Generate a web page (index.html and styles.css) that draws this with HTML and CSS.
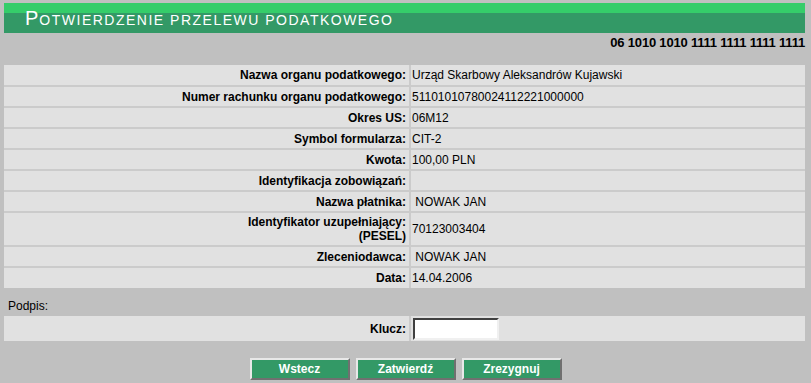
FILE: index.html
```html
<!DOCTYPE html>
<html lang="pl">

<head>
    <meta charset="UTF-8">
    <meta name="viewport" content="width=device-width, initial-scale=1.0">
    <title>Potwierdzenie przelewu podatkowego</title>
    <link rel="stylesheet" href="styles.css">
</head>

<body>
    <div class="page">
        <div class="title-bar">
            <h1 class="title"><span class="cap">P</span>OTWIERDZENIE PRZELEWU PODATKOWEGO</h1>
        </div>

        <div class="account">06 1010 1010 1111 1111 1111 1111</div>

        <table class="details">
            <tr>
                <th>Nazwa organu podatkowego:</th>
                <td>Urząd Skarbowy Aleksandrów Kujawski</td>
            </tr>
            <tr>
                <th>Numer rachunku organu podatkowego:</th>
                <td>51101010780024112221000000</td>
            </tr>
            <tr>
                <th>Okres US:</th>
                <td>06M12</td>
            </tr>
            <tr>
                <th>Symbol formularza:</th>
                <td>CIT-2</td>
            </tr>
            <tr>
                <th>Kwota:</th>
                <td>100,00 PLN</td>
            </tr>
            <tr>
                <th>Identyfikacja zobowiązań:</th>
                <td></td>
            </tr>
            <tr>
                <th>Nazwa płatnika:</th>
                <td>&nbsp;NOWAK JAN</td>
            </tr>
            <tr class="tall">
                <th>Identyfikator uzupełniający:<br>(PESEL)</th>
                <td>70123003404</td>
            </tr>
            <tr>
                <th>Zleceniodawca:</th>
                <td>&nbsp;NOWAK JAN</td>
            </tr>
            <tr>
                <th>Data:</th>
                <td>14.04.2006</td>
            </tr>
        </table>

        <div class="sign-label">Podpis:</div>

        <table class="details sign">
            <tr>
                <th>Klucz:</th>
                <td><input type="password" class="key-input"></td>
            </tr>
        </table>

        <div class="buttons">
            <button class="btn">Wstecz</button>
            <button class="btn">Zatwierdź</button>
            <button class="btn">Zrezygnuj</button>
        </div>
    </div>
</body>

</html>
```

FILE: styles.css
```css
* {
    margin: 0;
    padding: 0;
    box-sizing: border-box;
}

body {
    background: #c0c0c0;
    font-family: "Liberation Sans", Arial, sans-serif;
    font-size: 12px;
    color: #000;
}

.page {
    padding: 3px 6px 0 4px;
}

/* title */
.title-bar {
    height: 30px;
    background: linear-gradient(#35cd6a 0, #35cd6a 10px, #339966 10px);
    padding-left: 21px;
}

.title {
    font-weight: normal;
    font-size: 14px;
    color: #fff;
    letter-spacing: 1.5px;
    line-height: 30px;
}

.title .cap {
    font-size: 20px;
    letter-spacing: 1px;
}

.account {
    text-align: right;
    font-weight: bold;
    font-size: 13px;
    letter-spacing: -0.2px;
    line-height: 16px;
    margin-top: 2px;
    height: 30px;
}

/* tables */
.details {
    width: 100%;
    border-collapse: collapse;
}

.details th,
.details td {
    background: #e1e1e1;
    height: 21px;
    vertical-align: middle;
}

.details th {
    width: 406px;
    text-align: right;
    padding-right: 3px;
    font-weight: bold;
    line-height: 14px;
}

.details td {
    border-left: 2px solid #cbcbcb;
    padding-left: 1px;
}

.details tr + tr th,
.details tr + tr td {
    border-top: 2px solid #cbcbcb;
}

.details .tall th,
.details .tall td {
    height: 34px;
}

.sign-label {
    margin-top: 8px;
    padding-left: 4px;
    line-height: 20px;
    height: 20px;
}

.sign th,
.sign td {
    height: 25px;
}

.key-input {
    display: block;
    width: 86px;
    height: 22px;
    background: #fff;
    border: 2px solid;
    border-color: #404040 #f0f0f0 #f0f0f0 #404040;
    margin-left: 1px;
}

/* buttons */
.buttons {
    display: flex;
    justify-content: center;
    gap: 6px;
    margin-top: 17px;
    padding-left: 2px;
}

.btn {
    width: 100px;
    height: 22px;
    background: #339966;
    color: #fff;
    font-family: "Liberation Sans", Arial, sans-serif;
    font-size: 12px;
    font-weight: bold;
    border: 2px solid;
    border-color: #e8e8e8 #707070 #707070 #e8e8e8;
}
```
